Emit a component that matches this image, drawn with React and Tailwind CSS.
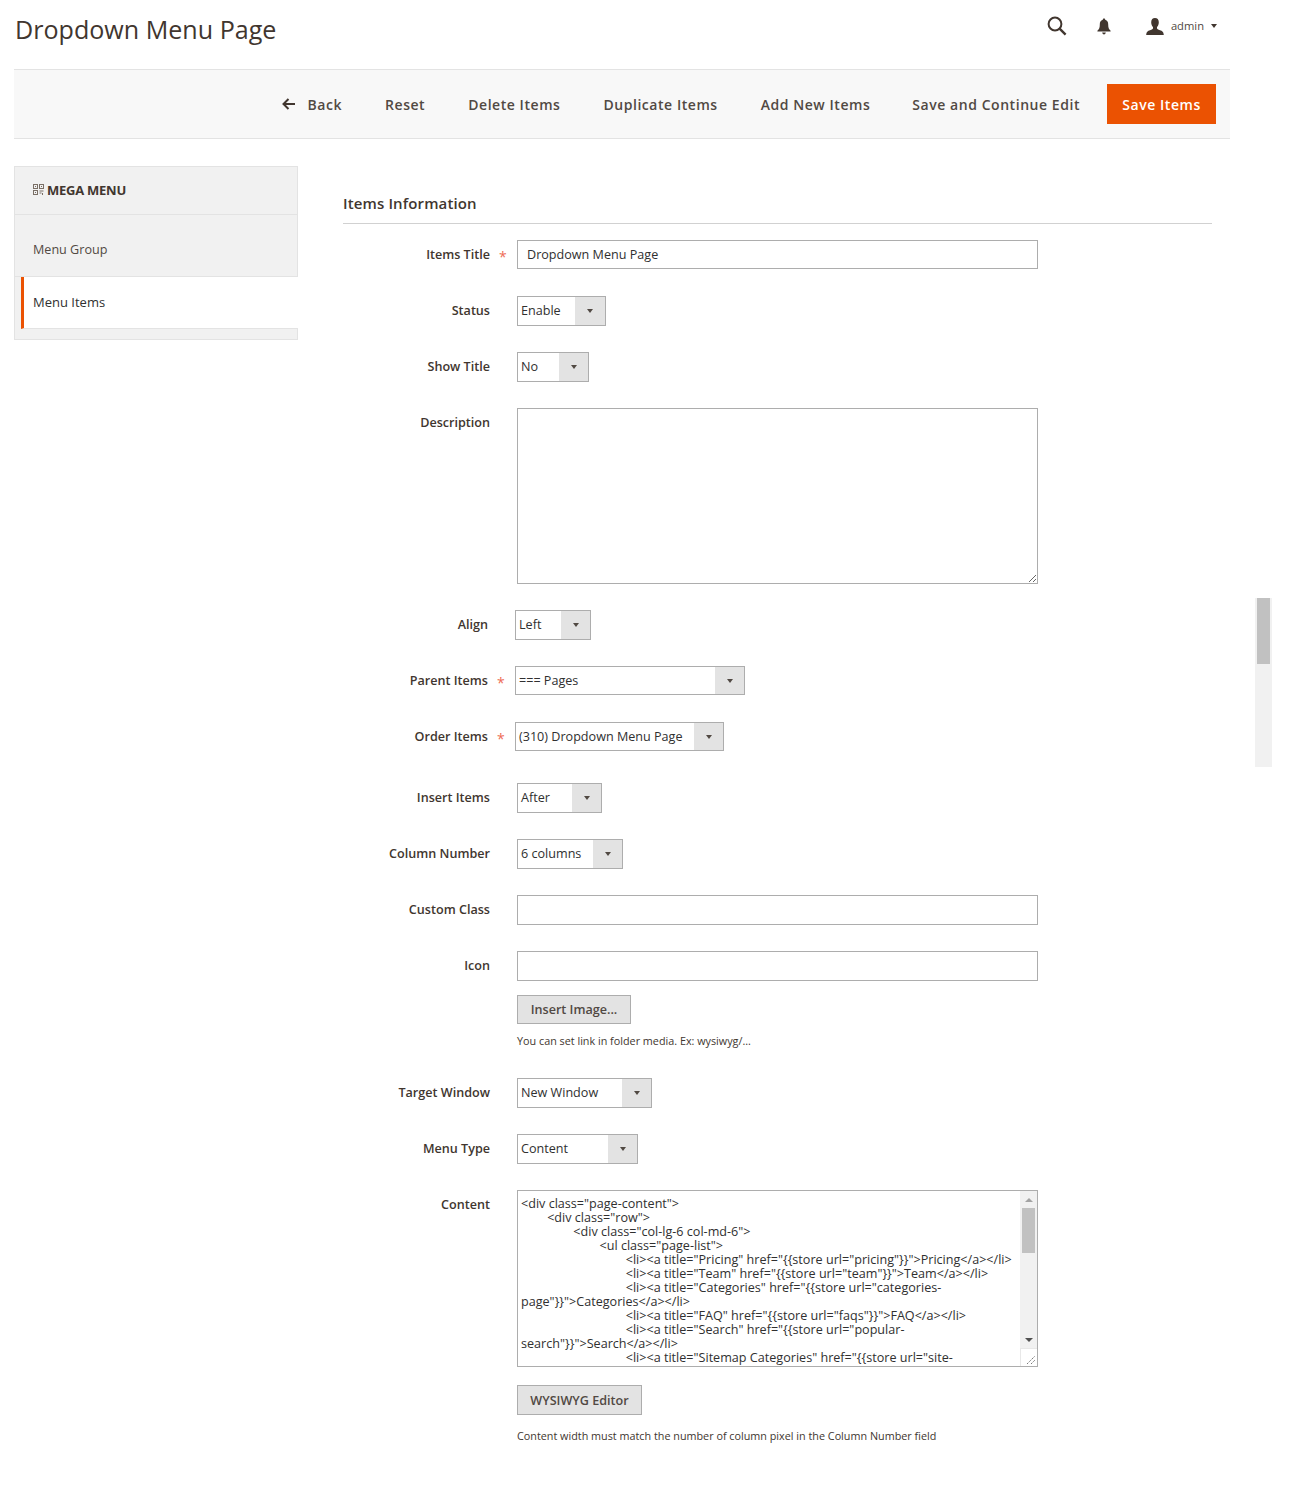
import React from "react";

const content = `<div class="page-content">
	<div class="row">
		<div class="col-lg-6 col-md-6">
			<ul class="page-list">
				<li><a title="Pricing" href="{{store url="pricing"}}">Pricing</a></li>
				<li><a title="Team" href="{{store url="team"}}">Team</a></li>
				<li><a title="Categories" href="{{store url="categories-page"}}">Categories</a></li>
				<li><a title="FAQ" href="{{store url="faqs"}}">FAQ</a></li>
				<li><a title="Search" href="{{store url="popular-search"}}">Search</a></li>
				<li><a title="Sitemap Categories" href="{{store url="site-map"}}">Sitemap</a></li>`;

function Row({ label, required, narrow, className = "", children }) {
  return (
    <div className={`flex items-start ${className}`}>
      <label className={`${narrow ? "w-[145px]" : "w-[147px]"} shrink-0 text-right text-[12.6px] font-semibold leading-[18px] pt-[6px] text-[#41362f]`}>
        {label}
      </label>
      <span className="w-[27px] shrink-0 pl-[9px] pt-[8px] text-[14px] leading-[18px] text-[#ee6b55]">{required ? "*" : ""}</span>
      <div className="min-w-0 flex-1">{children}</div>
    </div>
  );
}

function Select({ value, width, arrow, h30 = true }) {
  return (
    <div style={{ width }} className={`flex ${h30 ? "h-[30px]" : "h-[29px]"} border border-[#adadad] bg-white`}>
      <span className="flex-1 pl-[3px] text-[12.6px] leading-[27px] text-[#303030] whitespace-nowrap">{value}</span>
      <span style={{ width: arrow }} className="flex shrink-0 items-center justify-center bg-[#e3e3e3]">
        <span className="h-0 w-0 border-x-[3.5px] border-t-[4px] border-x-transparent border-t-[#514943]" />
      </span>
    </div>
  );
}

function Input({ value = "", h = "h-[30px]" }) {
  return (
    <input
      readOnly
      value={value}
      className={`block ${h} w-[521px] border border-[#adadad] bg-white px-[9px] pb-px text-[12.6px] text-[#303030] outline-none`}
    />
  );
}

function Grey({ children, w, short }) {
  return (
    <button style={{ width: w }} className={`block ${short ? "h-[29px] leading-[27px]" : "h-[30px] leading-[29px]"} border border-[#adadad] bg-[#e3e3e3] text-center text-[12.6px] font-semibold text-[#514943]`}>
      {children}
    </button>
  );
}

function Note({ children, className = "" }) {
  return <p className={`text-[10.8px] leading-[16px] text-[#41362f] ${className}`}>{children}</p>;
}

function Grip() {
  return (
    <svg width="10" height="10" viewBox="0 0 10 10" className="block">
      <path d="M1 9 9 1M5 9 9 5" stroke="#777" strokeWidth="1" strokeDasharray="1.5 0.8" fill="none" />
    </svg>
  );
}

export default function App() {
  return (
    <div className="relative min-h-[1487px] w-[1289px] bg-white pl-[14px] font-['Open_Sans',sans-serif] text-[#41362f]">
      <header className="flex h-[69px] w-[1216px] items-start justify-between">
        <h1 className="pl-[1px] pt-[11px] text-[25.1px] font-normal leading-[36px] text-[#41362f]">Dropdown Menu Page</h1>
        <div className="flex items-center pr-[13px] pt-[16px]">
          <svg width="20" height="20" viewBox="0 0 20 20" fill="none" stroke="#41362f" strokeWidth="2" className="mr-[30px]">
            <circle cx="8" cy="8" r="6.4" />
            <path d="M12.6 12.6 18.6 18.6" strokeWidth="2.4" />
          </svg>
          <svg width="14" height="17" viewBox="0 0 14 17" fill="#41362f" className="mr-[35px]">
            <path d="M7 0.6c.8 0 1.2.5 1.2 1.2 2.2.6 3 2.2 3 4.6 0 3 .6 4.6 2.4 6.4v.8H.4v-.8C2.2 11 2.8 9.4 2.8 6.4c0-2.4.8-4 3-4.6C5.800 1.100 6.200.6 7 .6Z" />
            <path d="M5.200 14.600h3.600C8.700 15.700 8 16.400 7 16.400s-1.700-.7-1.800-1.800Z" />
          </svg>
          <svg width="18" height="17" viewBox="0 0 18 17" fill="#41362f" className="mr-[7px]">
            <path d="M9 0c2.400 0 3.800 1.600 3.800 4.200 0 2-.7 3.800-1.800 4.800v1.200c0 .9 1 1.300 3 2 2.300.8 3.500 1.500 3.800 4.800H.2C.5 13.700 1.700 13 4 12.200c2-.7 3-1.100 3-2V9C5.900 8 5.200 6.200 5.200 4.200 5.200 1.600 6.600 0 9 0Z" />
          </svg>
          <span className="text-[11.2px] leading-[18px] text-[#514943]">admin</span>
          <span className="ml-[7px] h-0 w-0 border-x-[3px] border-t-[4px] border-x-transparent border-t-[#41362f]" />
        </div>
      </header>

      <div className="flex h-[70px] w-[1216px] items-center justify-end border-y border-[#e3e3e3] bg-[#f8f8f8] pr-[14px] text-[14px] font-semibold tracking-[0.55px] text-[#514943]">
        <svg width="14" height="12" viewBox="0 0 14 12" fill="none" stroke="#41362f" strokeWidth="2" className="mr-[12px]">
          <path d="M13 6H2M6.500 1 1.500 6l5 5" />
        </svg>
        <span className="mr-[43px]">Back</span>
        <span className="mr-[43px]">Reset</span>
        <span className="mr-[43px]">Delete Items</span>
        <span className="mr-[43px]">Duplicate Items</span>
        <span className="mr-[42px]">Add New Items</span>
        <span className="mr-[27px]">Save and Continue Edit</span>
        <button className="h-[40px] w-[109px] bg-[#eb5202] text-[14px] font-semibold tracking-[0.55px] text-white">Save Items</button>
      </div>

      <div className="mt-[27px] flex items-start">
        <aside className="w-[284px] shrink-0 border border-[#e3e3e3] bg-[#f1f1f1] pb-[10px]">
          <div className="flex h-[48px] items-center border-b border-[#e3e3e3] pb-[2px] pl-[18px]">
            <svg width="11" height="11" viewBox="0 0 11 11" className="mr-[3px]" fill="none" stroke="#7a6f66" strokeWidth="1">
              <rect x="0.500" y="0.500" width="4" height="4" />
              <rect x="6.500" y="0.500" width="4" height="4" />
              <rect x="0.500" y="6.500" width="4" height="4" />
              <path d="M2 2.500h1M8 2.500h1M2 8.500h1M6.500 7h4M6.500 9h2M9.500 9v2" />
            </svg>
            <span className="text-[13px] font-bold leading-[20px] tracking-[-0.25px] text-[#41362f]">MEGA MENU</span>
          </div>
          <div className="flex h-[62px] items-center border-b border-[#e3e3e3] pl-[18px] pt-[10px] text-[12.6px] text-[#514943]">Menu Group</div>
          <div className="-mr-px ml-[6px] flex h-[52px] items-center border-b border-[#e3e3e3] border-l-[3px] border-l-[#eb5202] bg-white pl-[9px] text-[13px] text-[#303030]">
            Menu Items
          </div>
        </aside>

        <main className="ml-[45px] w-[869px] pt-[27px]">
          <h2 className="h-[31px] border-b border-[#d1d1d1] text-[15px] font-semibold leading-[20px] tracking-[0.12px] text-[#41362f]">Items Information</h2>

          <div className="mt-[16px] flex flex-col gap-[26px]">
            <Row label="Items Title" required>
              <Input value="Dropdown Menu Page" h="h-[29px]" />
            </Row>
            <Row label="Status" className="mt-[1px]"><Select value="Enable" width={89} arrow={30} /></Row>
            <Row label="Show Title"><Select value="No" width={72} arrow={29} /></Row>
            <Row label="Description">
              <textarea readOnly className="block h-[176px] w-[521px] resize border border-[#adadad] bg-white outline-none" />
            </Row>
            <Row label="Align" narrow><Select value="Left" width={76} arrow={29} /></Row>
            <Row label="Parent Items" required narrow><Select value="=== Pages" width={230} arrow={29} h30={false} /></Row>
            <Row label="Order Items" required narrow className="mt-[1px]"><Select value="(310) Dropdown Menu Page" width={209} arrow={29} h30={false} /></Row>
            <Row label="Insert Items" className="mt-[6px]"><Select value="After" width={85} arrow={29} /></Row>
            <Row label="Column Number"><Select value="6 columns" width={106} arrow={29} /></Row>
            <Row label="Custom Class"><Input /></Row>
            <Row label="Icon">
              <Input />
              <div className="mt-[14px]"><Grey w={114} short>Insert Image...</Grey></div>
              <Note className="mt-[9px]">You can set link in folder media. Ex: wysiwyg/...</Note>
            </Row>
            <Row label="Target Window" className="mt-[3px]"><Select value="New Window" width={135} arrow={29} /></Row>
            <Row label="Menu Type"><Select value="Content" width={121} arrow={29} /></Row>
            <Row label="Content">
              <div className="relative h-[177px] w-[521px] border border-[#adadad] bg-white">
                <textarea
                  readOnly
                  value={content}
                  style={{ tabSize: 8 }}
                  className="block h-[175px] w-[519px] resize-none overflow-hidden bg-white pl-[3px] pr-[20px] pt-[6px] text-[12.6px] leading-[14px] text-[#303030] outline-none"
                />
                <div className="absolute right-0 top-0 flex h-[175px] w-[17px] flex-col bg-[#f1f1f1]">
                  <div className="flex h-[17px] items-center justify-center">
                    <span className="h-0 w-0 border-x-[4px] border-b-[4px] border-x-transparent border-b-[#a3a3a3]" />
                  </div>
                  <div className="mx-auto h-[45px] w-[13px] bg-[#c1c1c1]" />
                  <div className="flex-1" />
                  <div className="flex h-[17px] items-center justify-center">
                    <span className="h-0 w-0 border-x-[4px] border-t-[4px] border-x-transparent border-t-[#505050]" />
                  </div>
                  <div className="flex h-[18px] items-end justify-end border-l border-t border-[#e8e8e8] bg-white pb-px pr-px"><Grip /></div>
                </div>
              </div>
              <div className="mt-[18px]"><Grey w={125}>WYSIWYG Editor</Grey></div>
              <Note className="mt-[13px]">Content width must match the number of column pixel in the Column Number field</Note>
            </Row>
          </div>
        </main>
      </div>

      <div className="absolute left-[1255px] top-[598px] h-[169px] w-[17px] bg-[#f1f1f1]">
        <div className="mx-auto h-[66px] w-[13px] bg-[#c1c1c1]" />
      </div>
    </div>
  );
}
